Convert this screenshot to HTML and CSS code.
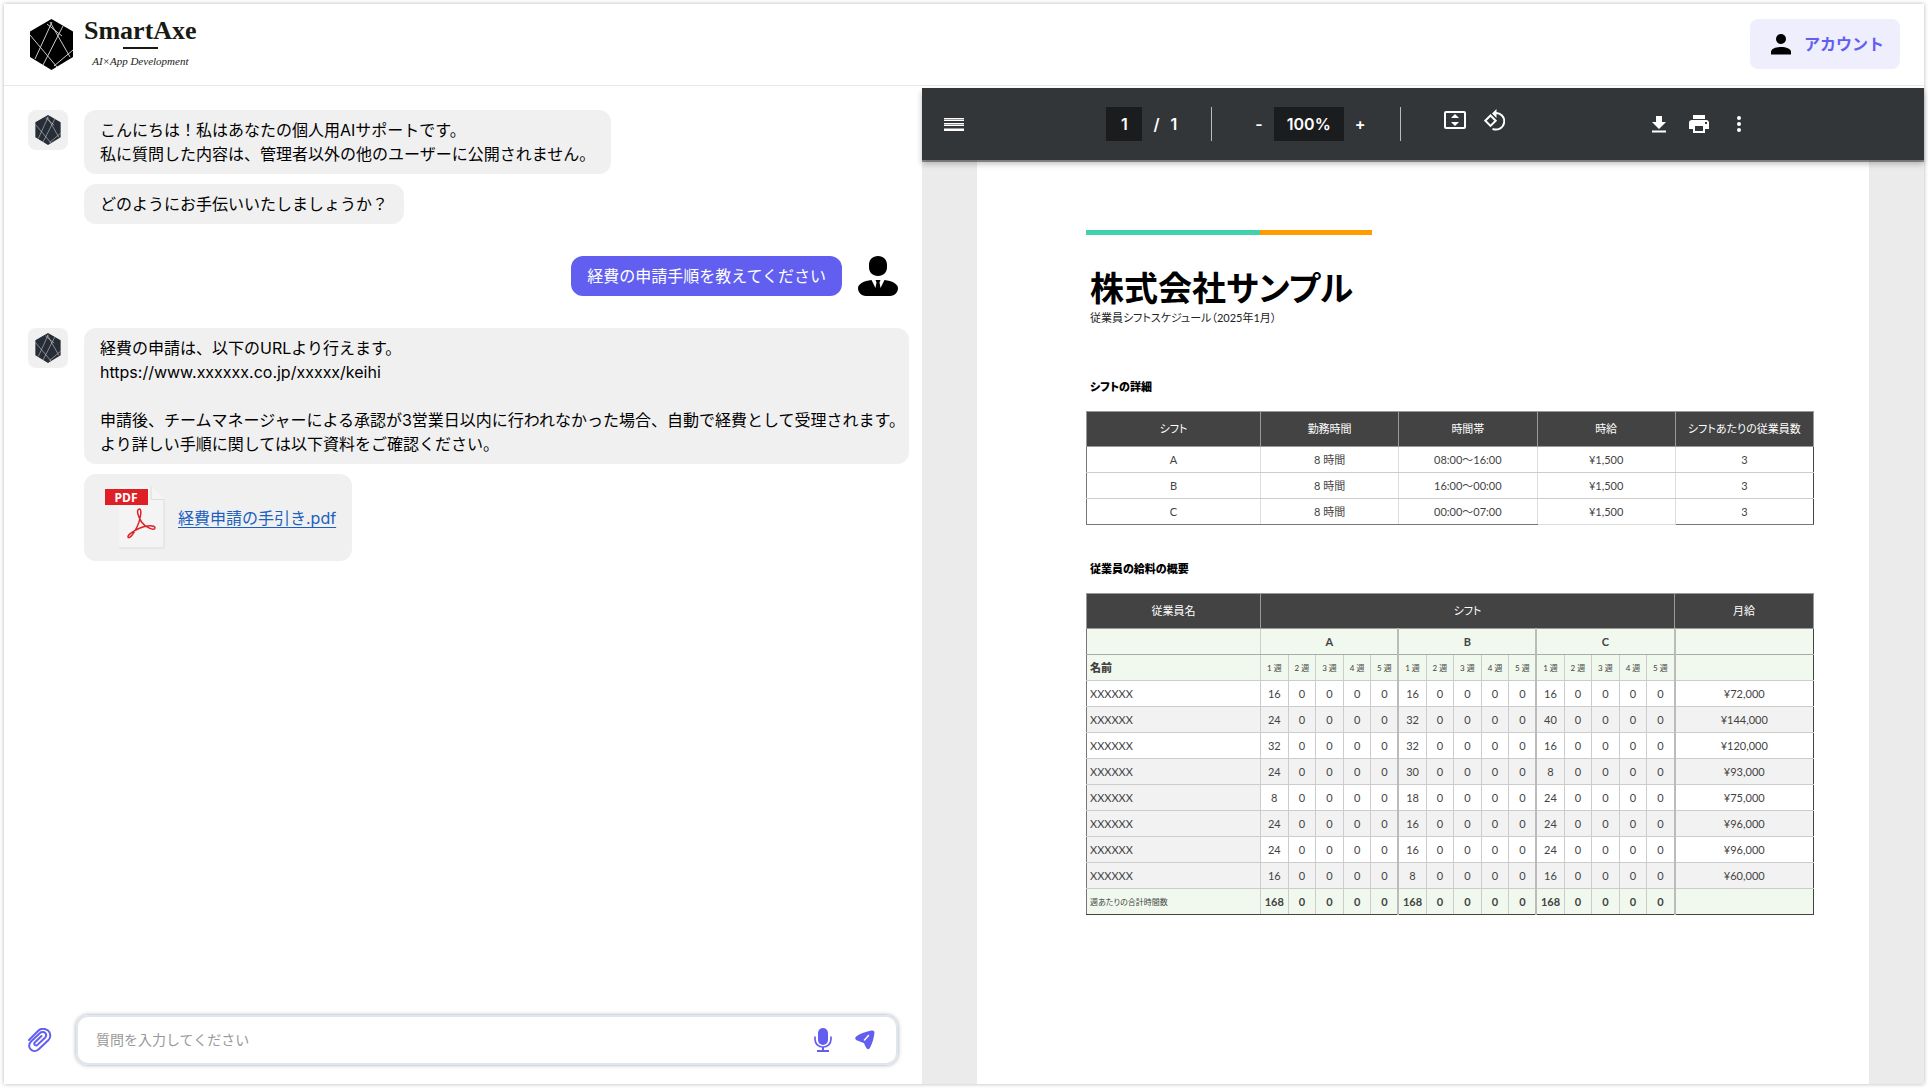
FILE: index.html
```html
<!DOCTYPE html>
<html lang="ja">
<head>
<meta charset="utf-8">
<title>SmartAxe</title>
<link rel="stylesheet" href="styles.css">
</head>
<body>
<svg class="sprite" aria-hidden="true">
  <symbol id="gem" viewBox="0 0 43 51">
    <path fill="currentColor" d="M21.500 0L43 12.500V38L21.500 51 0 38V12.500z"/>
    <path class="gem-lines" d="M22 3L5 40M20 3L40 38M33 7L13 46M0 16L27 48M17 5L32 17M43 31L24 47"/>
  </symbol>
</svg>
<div class="app">
  <header class="header">
    <a class="brand" href="#">
      <svg class="brand-mark" viewBox="0 0 43 51"><use href="#gem"/></svg>
      <span class="brand-text">
        <span class="brand-name">SmartAxe</span>
        <span class="brand-rule"></span>
        <span class="brand-tag">AI×App Development</span>
      </span>
    </a>
    <button class="account" type="button">
      <svg width="20" height="21" viewBox="0 0 20 21"><circle cx="10" cy="5" r="5"/><path d="M0 20.500V18c0-3.300 5-5 10-5s10 1.700 10 5v2.500z"/></svg>
      アカウント
    </button>
  </header>
  <div class="columns">
    <main class="chat">
      <div class="messages">
        <div class="turn">
          <span class="avatar"><svg width="26" height="30"><use href="#gem"/></svg></span>
          <div class="bubbles">
            <p class="bubble">こんにちは！私はあなたの個人用AIサポートです。<br>私に質問した内容は、管理者以外の他のユーザーに公開されません。</p>
            <p class="bubble">どのようにお手伝いいたしましょうか？</p>
          </div>
        </div>
        <div class="turn turn-user">
          <p class="bubble bubble-user">経費の申請手順を教えてください</p>
          <svg width="40" height="40" viewBox="0 0 40 40"><path d="M20 0c5.500 0 9 3.500 9 9v2c0 5.500-3.500 9-9 9s-9-3.500-9-9V9c0-5.500 3.500-9 9-9zM13.500 24l4 8 1-5.500-1-2.500h5l-1 2.500 1 5.500 4-8c7.500.8 13.500 4 13.500 8 0 4-3 8-8 8H8c-5 0-8-4-8-8 0-4 6-7.200 13.500-8z"/></svg>
        </div>
        <div class="turn">
          <span class="avatar"><svg width="26" height="30"><use href="#gem"/></svg></span>
          <div class="bubbles">
            <p class="bubble bubble-long">経費の申請は、以下のURLより行えます。<br>https://www.xxxxxx.co.jp/xxxxx/keihi<br><br>申請後、チームマネージャーによる承認が3営業日以内に行われなかった場合、自動で経費として受理されます。<br>より詳しい手順に関しては以下資料をご確認ください。</p>
            <div class="bubble attachment">
              <svg width="60" height="64" viewBox="0 0 60 64">
                <path fill="#f4f4f4" d="M14 0h32l13 13v49H14z"/>
                <path fill="none" stroke="#dcdcdc" d="M46 0v13.500h13V62H14"/>
                <rect y="3" width="43" height="16" fill="#df1f26"/>
                <text class="pdf-label" x="21" y="16" text-anchor="middle">PDF</text>
                <path fill="none" stroke="#df1f26" stroke-width="1.500" d="M34.500 23c-4 .5-1 8 2 13 3.500 5 13 9.500 13.500 6 .3-3.500-10-2.500-15 0-6 2.500-12.500 7-12 9 1.500 2.500 6-4 9-10 3-6 5.500-18 2.500-18z"/>
              </svg>
              <a href="#">経費申請の手引き.pdf</a>
            </div>
          </div>
        </div>
      </div>
      <form class="composer">
        <button class="icon-button" type="button" aria-label="添付">
          <svg width="24" height="24" viewBox="0 0 24 24" fill="none" stroke="currentColor" stroke-width="2" stroke-linecap="round"><path d="M1 12L10 3C13 0 17 .5 20 2.500c3 2.500 3 7 .5 9.500L11 21c-2.500 2.500-6 2.500-8.200.5S.5 16 3 13.500L12 5c1.500-1.500 4-1.300 5.200 0s1.200 3.300-.2 4.700l-7.500 7.200c-.8.800-2 .8-2.700 0s-.7-1.800.2-2.600L13.500 8"/></svg>
        </button>
        <div class="field">
          <input type="text" aria-label="質問" placeholder="質問を入力してください">
          <button class="icon-button" type="button" aria-label="音声入力">
            <svg width="18" height="24" viewBox="0 0 18 24" fill="currentColor"><rect x="4" width="10" height="17" rx="5"/><path fill="none" stroke="currentColor" stroke-width="1.700" d="M1 8.500V11c0 5 3.500 8 8 8s8-3 8-8V8.500"/><path d="M8 19h2v3h5v2H3v-2h5z"/></svg>
          </button>
          <button class="icon-button" type="submit" aria-label="送信">
            <svg width="20" height="20" viewBox="0 0 20 20"><path fill="currentColor" d="M16.500.6c2-.4 3.200.6 2.900 2.600-.6 5-2 9.800-4.400 14.600-.9 1.800-2.400 1.900-3.400.4-1.100-1.700-2-3-2.600-5.200-2.300-.6-4.600-1.700-7.500-2.800C0 9.500-.2 7.500 1.200 6.500 5.500 3.500 11 1.500 16.500.6z"/><path stroke="#fff" stroke-width="1.500" stroke-linecap="round" d="M9.500 10l4-4.500"/></svg>
          </button>
        </div>
      </form>
    </main>
    <section class="viewer" aria-label="PDF">
      <div class="toolbar">
        <button class="tool menu" type="button" aria-label="メニュー"><svg width="20" height="14" viewBox="0 0 20 14"><path fill="#999" d="M0 1h20v2H0zM0 6h20v2H0zM0 11h20v2H0z"/><path fill="#fff" d="M0 1h20v1H0zM0 3h20v1H0zM0 6h20v1H0zM0 8h20v1H0zM0 12h20v2H0z"/></svg></button>
        <div class="group pages"><input class="page-number" type="text" value="1" aria-label="ページ"><span>/</span><span>1</span></div>
        <span class="divider"></span>
        <div class="group zoom"><button class="tool" type="button">-</button><input class="zoom-value" type="text" value="100%" aria-label="倍率"><button class="tool" type="button">+</button></div>
        <span class="divider"></span>
        <div class="group view">
          <button class="tool" type="button" aria-label="ページに合わせる"><svg width="22" height="18" viewBox="0 0 22 18" fill="currentColor"><rect x="1" y="1" width="20" height="16" rx="1" fill="none" stroke="currentColor" stroke-width="2"/><path d="M11 3l4 4H7zM11 15l4-4H7z"/></svg></button>
          <button class="tool" type="button" aria-label="回転"><svg width="21" height="22" viewBox="0 0 21 22" fill="none" stroke="currentColor" stroke-width="2"><path d="M6.500 6.500l5.200 5.200-5.200 5.200-5.200-5.200z"/><path d="M11 4a8.300 8.300 0 1 1-2.500 15.800"/><path fill="currentColor" stroke="none" d="M12.500 0v9L8 4.500z"/></svg></button>
        </div>
        <div class="group actions">
          <button class="tool" type="button" aria-label="ダウンロード"><svg width="14" height="17" viewBox="0 0 14 17" fill="currentColor"><path d="M4 0h6v6h4l-7 7-7-7h4zM0 14.500h14v2H0z"/></svg></button>
          <button class="tool" type="button" aria-label="印刷"><svg width="20" height="18" viewBox="0 0 20 18" fill="currentColor"><path d="M4 0h12v4H4z"/><path fill-rule="evenodd" d="M3 5h14a3 3 0 0 1 3 3v6h-4v4H4v-4H0V8a3 3 0 0 1 3-3zm3 6v5h8v-5zm10-4v2h2V7z"/></svg></button>
          <button class="tool" type="button" aria-label="その他"><svg width="4" height="16" viewBox="0 0 4 16" fill="currentColor"><circle cx="2" cy="2" r="2"/><circle cx="2" cy="8" r="2"/><circle cx="2" cy="14" r="2"/></svg></button>
        </div>
      </div>
      <article class="sheet">
        <div class="accent"></div>
        <h1>株式会社サンプル</h1>
        <p class="subtitle">従業員シフトスケジュール（2025年1月）</p>
        <h2>シフトの詳細</h2>
        <table class="details">
          <colgroup><col class="first"><col><col><col><col></colgroup>
          <thead><tr><th>シフト</th><th>勤務時間</th><th>時間帯</th><th>時給</th><th>シフトあたりの従業員数</th></tr></thead>
          <tbody>
            <tr><td>A</td><td>8 時間</td><td>08:00〜16:00</td><td>¥1,500</td><td>3</td></tr>
            <tr><td>B</td><td>8 時間</td><td>16:00〜00:00</td><td>¥1,500</td><td>3</td></tr>
            <tr><td>C</td><td>8 時間</td><td>00:00〜07:00</td><td>¥1,500</td><td>3</td></tr>
          </tbody>
        </table>
        <h2>従業員の給料の概要</h2>
        <table class="salary">
          <colgroup><col class="first"><col span="15"><col class="pay"></colgroup>
          <thead>
            <tr><th>従業員名</th><th colspan="15">シフト</th><th>月給</th></tr>
            <tr class="shifts"><td></td><th colspan="5">A</th><th colspan="5">B</th><th colspan="5">C</th><td></td></tr>
            <tr class="weeks"><th>名前</th><td>1 週</td><td>2 週</td><td>3 週</td><td>4 週</td><td>5 週</td><td>1 週</td><td>2 週</td><td>3 週</td><td>4 週</td><td>5 週</td><td>1 週</td><td>2 週</td><td>3 週</td><td>4 週</td><td>5 週</td><td></td></tr>
          </thead>
          <tbody>
            <tr><td>XXXXXX</td><td>16</td><td>0</td><td>0</td><td>0</td><td>0</td><td>16</td><td>0</td><td>0</td><td>0</td><td>0</td><td>16</td><td>0</td><td>0</td><td>0</td><td>0</td><td>¥72,000</td></tr>
            <tr><td>XXXXXX</td><td>24</td><td>0</td><td>0</td><td>0</td><td>0</td><td>32</td><td>0</td><td>0</td><td>0</td><td>0</td><td>40</td><td>0</td><td>0</td><td>0</td><td>0</td><td>¥144,000</td></tr>
            <tr><td>XXXXXX</td><td>32</td><td>0</td><td>0</td><td>0</td><td>0</td><td>32</td><td>0</td><td>0</td><td>0</td><td>0</td><td>16</td><td>0</td><td>0</td><td>0</td><td>0</td><td>¥120,000</td></tr>
            <tr><td>XXXXXX</td><td>24</td><td>0</td><td>0</td><td>0</td><td>0</td><td>30</td><td>0</td><td>0</td><td>0</td><td>0</td><td>8</td><td>0</td><td>0</td><td>0</td><td>0</td><td>¥93,000</td></tr>
            <tr class="muted"><td>XXXXXX</td><td>8</td><td>0</td><td>0</td><td>0</td><td>0</td><td>18</td><td>0</td><td>0</td><td>0</td><td>0</td><td>24</td><td>0</td><td>0</td><td>0</td><td>0</td><td>¥75,000</td></tr>
            <tr><td>XXXXXX</td><td>24</td><td>0</td><td>0</td><td>0</td><td>0</td><td>16</td><td>0</td><td>0</td><td>0</td><td>0</td><td>24</td><td>0</td><td>0</td><td>0</td><td>0</td><td>¥96,000</td></tr>
            <tr class="muted"><td>XXXXXX</td><td>24</td><td>0</td><td>0</td><td>0</td><td>0</td><td>16</td><td>0</td><td>0</td><td>0</td><td>0</td><td>24</td><td>0</td><td>0</td><td>0</td><td>0</td><td>¥96,000</td></tr>
            <tr><td>XXXXXX</td><td>16</td><td>0</td><td>0</td><td>0</td><td>0</td><td>8</td><td>0</td><td>0</td><td>0</td><td>0</td><td>16</td><td>0</td><td>0</td><td>0</td><td>0</td><td>¥60,000</td></tr>
          </tbody>
          <tfoot>
            <tr><th>週あたりの合計時間数</th><td>168</td><td>0</td><td>0</td><td>0</td><td>0</td><td>168</td><td>0</td><td>0</td><td>0</td><td>0</td><td>168</td><td>0</td><td>0</td><td>0</td><td>0</td><td></td></tr>
          </tfoot>
        </table>
      </article>
    </section>
  </div>
</div>
</body>
</html>
```
FILE: styles.css
```css
* { box-sizing: border-box; }
body {
  margin: 0;
  padding: 4px;
  font: 16px/24px Inter, "Noto Sans CJK JP", sans-serif;
  color: #000;
  background: #fff;
}
p, h1, h2 { margin: 0; }
svg { display: block; flex: none; }
button { padding: 0; border: 0; background: none; font: inherit; color: inherit; cursor: pointer; }
input { border: 0; outline: 0; min-width: 0; font: inherit; }
.sprite { position: absolute; width: 0; height: 0; }
.gem-lines { fill: none; stroke: #ccc; stroke-width: 1; }

.app {
  display: flex;
  flex-direction: column;
  min-height: calc(100vh - 8px);
  box-shadow: 0 0 4px rgba(0, 0, 0, .3);
}
.header {
  display: flex;
  justify-content: space-between;
  align-items: flex-start;
  height: 82px;
  padding: 15px 24px 0 26px;
  border-bottom: 1px solid #e8e8e8;
}
.brand { display: flex; gap: 11px; color: #1a1a14; text-decoration: none; }
.brand-mark { width: 43px; height: 51px; color: #000; }
.brand-text { display: flex; flex-direction: column; align-items: center; font-family: "Liberation Serif", serif; }
.brand-name { font-size: 26px; line-height: 24px; font-weight: 700; }
.brand-rule { width: 35px; height: 2px; margin: 4px 0; background: #1a1a14; }
.brand-tag { font-size: 11px; line-height: 16px; font-style: italic; }
.account {
  display: flex;
  align-items: center;
  gap: 13px;
  height: 50px;
  padding: 0 16px 0 21px;
  border-radius: 8px;
  background: #efeefd;
  color: #625ff0;
  font-weight: 700;
}
.account svg { fill: #000; }

.columns { display: grid; grid-template-columns: minmax(0, 918fr) minmax(0, 1002fr); flex: 1; padding-top: 2px; }
.chat { display: flex; flex-direction: column; justify-content: space-between; padding: 22px 24px 19px; }
.messages { display: flex; flex-direction: column; gap: 32px; }
.turn { display: flex; gap: 16px; align-items: flex-start; }
.turn-user { justify-content: flex-end; }
.avatar { display: grid; place-items: center; flex: none; width: 40px; height: 40px; border-radius: 8px; background: #f0f0f0; color: #262d36; }
.bubbles { display: flex; flex-direction: column; align-items: flex-start; gap: 10px; flex: 1; min-width: 0; margin-right: -11px; }
.bubble { padding: 8px 16px; border-radius: 12px; background: #f0f0f0; }
.bubble-user { background: #625ff0; color: #fff; }
.bubble-long { width: 100%; white-space: nowrap; }
.attachment { display: flex; align-items: center; gap: 13px; padding: 12px 16px 11px 21px; }
.attachment a { color: #1b5fc1; text-underline-offset: 3px; }
.pdf-label { font: 700 12px "Open Sans", sans-serif; fill: #fff; }

.composer { display: flex; align-items: center; gap: 24px; color: #625ff0; }
.icon-button { flex: none; }
.field {
  display: flex;
  align-items: center;
  gap: 23px;
  flex: 1;
  height: 50px;
  padding: 0 21px 0 16px;
  border: 2px solid #e0e6f0;
  border-radius: 12px;
  box-shadow: 0 0 4px rgba(0, 0, 0, .35);
}
.field input { flex: 1; font-size: 14px; background: none; }
.field input::placeholder { color: #999; opacity: 1; }

.viewer { display: flex; flex-direction: column; background: #ebebeb; }
.toolbar {
  position: relative;
  display: flex;
  align-items: center;
  height: 72px;
  padding: 0 183px 0 22px;
  background: #323639;
  box-shadow: 0 2px 0 rgba(60, 50, 50, .5), 0 4px 6px rgba(0, 0, 0, .25);
  color: #fff;
  font-weight: 600;
}
.group { display: flex; align-items: center; }
.pages { gap: 11px; margin: 0 34px 0 auto; }
.page-number, .zoom-value { height: 34px; padding: 0; background: #1b1c1e; color: #fff; text-align: center; }
.page-number { width: 36px; }
.zoom-value { width: 70px; }
.divider { width: 1px; height: 34px; background: #bbb; }
.zoom { gap: 11px; margin: 0 34px 0 43px; }
.view { gap: 18px; margin: 0 auto 8px 43px; padding-right: 5px; }
.actions { gap: 23px; }
.actions .tool:last-child { margin-left: 5px; }

.sheet {
  flex: 1;
  margin: 0 55px;
  padding: 70px 55px 40px 109px;
  background: #fff;
  color: #434343;
  font: 11px/14px Lato, "Noto Sans CJK JP", sans-serif;
  font-feature-settings: "palt";
}
.accent { width: 286px; height: 5px; background: linear-gradient(90deg, #42d1ad 174px, #ff9c00 174px); }
.sheet h1, .sheet h2, .subtitle { padding-left: 4px; color: #000; }
.sheet h1 { margin-top: 32px; font-size: 34px; line-height: 42px; font-weight: 700; }
.subtitle { font-size: 11px; line-height: 18px; color: #222; }
.sheet h2 { margin-top: 53px; font-size: 11px; line-height: 14px; font-weight: 900; }
.sheet table { width: 100%; margin-top: 17px; border-collapse: collapse; table-layout: fixed; border: 1px solid #777; border-right-color: #434343; }
.sheet table + h2 { margin-top: 37px; }
.first { width: 174px; }
.pay { width: 139px; }
td, th { height: 26px; padding: 0; border: 1px solid #ccc; text-align: center; font-weight: 400; white-space: nowrap; }
thead tr:first-child th { height: 35px; background: #434343; color: #fff; border-color: #999; }
.details td { border-right: 1px solid #ddd; }
tr > :first-child { border-left-color: #777; }
tr > :last-child { border-right-color: #434343; }
.details tr:last-child td { border-bottom-color: #777; }
.details tr:last-child td:nth-child(4) { border-bottom-color: #ddd; }

.salary .shifts > *, .salary .weeks > *, .salary tfoot tr > * { background: #f1f9ee; }
.salary .shifts > * { font-weight: 700; border-bottom-color: #aaa; }
.salary .weeks td { font-size: 8px; }
.salary tr:not(:first-child) > :first-child { padding-left: 3px; text-align: left; }
.salary tbody tr > :first-child { padding-left: 3px; text-align: left; }
.salary .weeks th { font-weight: 900; }
.salary .shifts th, .salary td:nth-child(6), .salary td:nth-child(11), .salary td:nth-child(16) { border-right: 2px solid #bbb; }
.salary tbody tr:nth-child(even) { background: #f2f2f2; }
.salary tbody .muted td:first-child { background: #f2f2f2; }
.salary tfoot th { padding-left: 3px; font-size: 8px; text-align: left; }
.salary tfoot td { font-weight: 700; }
.salary tfoot tr > * { border-bottom-color: #434343; }
```
